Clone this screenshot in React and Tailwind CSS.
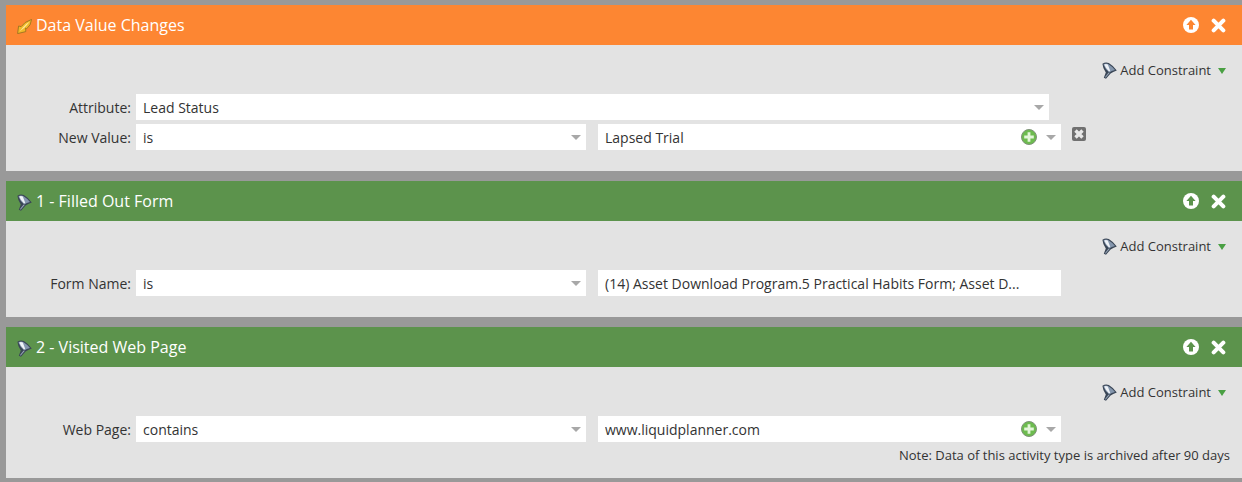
function Funnel({ className = "" }) {
  return (
    <svg viewBox="0 0 15 17" className={className}>
      <path d="M0.4 1.8 Q3.5 -0.4 6.8 1 Q11.8 4 14.8 8.4 Q10.8 9.8 8.6 11.4 L4 16.8 L1.8 15.8 L3.8 10.6 Q0.8 6.4 0.4 1.8 Z" fill="#3a4656" />
      <path d="M1.4 2.4 Q3.5 1 6.2 2 Q10.4 4.6 13 8 Q9.4 8.8 7.4 10.4 Q3 7 1.4 2.4 Z" fill="#8496ad" />
      <path d="M2.2 2.4 Q4.2 1.6 5.8 2.6 L8.2 8.8 L7 9.6 Q3.8 6.4 2.2 2.4 Z" fill="#eef2f7" />
      <path d="M6.6 10.6 L7.6 11 L3.8 15.6 L2.9 15.2 Z" fill="#9aa8ba" />
    </svg>
  );
}

function Pencil({ className = "" }) {
  return (
    <svg viewBox="0 0 15 15" className={className}>
      <path d="M0.6 14.6 L1.6 7 L4.2 7.6 Q7 3 14.6 0.4 Q14 6.6 9.6 9.8 L8.6 9 L8.8 12.6 Z" fill="#f2b92a" stroke="#9c7420" strokeWidth="0.9" strokeLinejoin="round" />
      <path d="M2.6 12.4 L5.8 8.4 Q8.6 4.8 12.8 2.4 Q10 6 7.4 8.8 Z" fill="#fdeb9a" />
    </svg>
  );
}

function Up() {
  return (
    <svg viewBox="0 0 16 16" className="w-4 h-4">
      <circle cx="8" cy="8" r="8" fill="#fff" />
      <path d="M8 2.8 L12.6 8 H10 V12.6 H6 V8 H3.4 Z" fill="var(--h)" />
    </svg>
  );
}

function Close() {
  return (
    <svg viewBox="0 0 14 14" className="w-[15px] h-[15px]">
      <path d="M2.5 2.5 L11.5 11.5 M11.5 2.5 L2.5 11.5" stroke="#fff" strokeWidth="3.8" strokeLinecap="round" />
    </svg>
  );
}

function Plus() {
  return (
    <svg viewBox="0 0 16 16" className="w-4 h-4">
      <circle cx="8" cy="8" r="7.5" fill="#6dbb4f" stroke="#7f9279" strokeWidth="1" />
      <path d="M8 3.2 V12.8 M3.2 8 H12.8" stroke="#e4f6da" strokeWidth="2.8" />
    </svg>
  );
}

function Caret() {
  return <span className="w-0 h-0 border-x-[5px] border-x-transparent border-t-[5px] border-t-[#a8a8a8]" />;
}

function Field({ width, text, plus }) {
  return (
    <div className={`${width} h-[26px] bg-white flex items-center pl-[7px] pr-[5px]`}>
      <span className="flex-1 text-[14px] text-[#333333] truncate">{text}</span>
      {plus && <span className="mr-[9px] flex"><Plus /></span>}
      {plus !== undefined && <Caret />}
    </div>
  );
}

function AddConstraint() {
  return (
    <div className="h-[20px] flex items-center justify-end pr-[16px] pt-[1px]">
      <Funnel className="w-[15px] h-[17px] mr-[3px]" />
      <span className="text-[13px] text-[#333333]">Add Constraint</span>
      <span className="ml-[7px] w-0 h-0 border-x-[4px] border-x-transparent border-t-[6px] border-t-[#4aa043]" />
    </div>
  );
}

function Label({ children }) {
  return <div className="w-[125px] text-right text-[14px] text-[#333333]">{children}</div>;
}

function Card({ title, icon, headerClass, hColor, children }) {
  return (
    <section className="ml-[6px]">
      <header
        className={`h-10 flex items-center pl-[11px] pr-[16px] ${headerClass}`}
        style={{ "--h": hColor }}
      >
        <span className="w-[19px] flex">{icon}</span>
        <h2 className="flex-1 text-[16px] text-white font-normal">{title}</h2>
        <div className="flex items-center gap-[12px]"><Up /><Close /></div>
      </header>
      <div className="bg-[#e3e3e3]">{children}</div>
    </section>
  );
}

export default function App() {
  return (
    <div className="w-[1242px] h-[482px] overflow-hidden bg-[#999999] pt-[5px] flex flex-col gap-[10px]" style={{ fontFamily: '"Open Sans", sans-serif' }}>
      <Card title="Data Value Changes" headerClass="bg-[#fd8632]" hColor="#fd8632" icon={<Pencil className="w-[15px] h-[15px] mt-[3px]" />}>
        <div className="h-[126px] pt-[15px]">
          <AddConstraint />
          <div className="mt-[14px] flex flex-col gap-1">
            <div className="flex items-center gap-[5px]">
              <Label>Attribute:</Label>
              <Field width="w-[913px]" text="Lead Status" plus={false} />
            </div>
            <div className="flex items-center gap-[5px]">
              <Label>New Value:</Label>
              <Field width="w-[450px]" text="is" plus={false} />
              <div className="ml-[7px]"><Field width="w-[463px]" text="Lapsed Trial" plus={true} /></div>
              <span className="ml-[6px] mb-[6px] w-[14px] h-[14px] rounded-[2px] bg-[#707070] flex items-center justify-center">
                <svg viewBox="0 0 12 12" className="w-[12px] h-[12px]"><path d="M2.5 2.5 L9.5 9.5 M9.5 2.5 L2.5 9.5" stroke="#e8e8e8" strokeWidth="3.4" /></svg>
              </span>
            </div>
          </div>
        </div>
      </Card>
      <Card title="1 - Filled Out Form" headerClass="bg-[#5c934c]" hColor="#5c934c" icon={<Funnel className="w-[15px] h-[17px] mt-[2px]" />}>
        <div className="h-[96px] pt-[15px]">
          <AddConstraint />
          <div className="mt-[14px] flex items-center gap-[5px]">
            <Label>Form Name:</Label>
            <Field width="w-[450px]" text="is" plus={false} />
            <div className="ml-[7px]"><Field width="w-[463px]" text="(14) Asset Download Program.5 Practical Habits Form; Asset D..." /></div>
          </div>
        </div>
      </Card>
      <Card title="2 - Visited Web Page" headerClass="bg-[#5c934c]" hColor="#5c934c" icon={<Funnel className="w-[15px] h-[17px] mt-[2px]" />}>
        <div className="h-[111px] pt-[15px]">
          <AddConstraint />
          <div className="mt-[14px] flex items-center gap-[5px]">
            <Label>Web Page:</Label>
            <Field width="w-[450px]" text="contains" plus={false} />
            <div className="ml-[7px]"><Field width="w-[463px]" text="www.liquidplanner.com" plus={true} /></div>
          </div>
          <p className="mt-[4px] pr-[12px] text-right text-[13px] leading-[18px] text-[#333333]">Note: Data of this activity type is archived after 90 days</p>
        </div>
      </Card>
    </div>
  );
}
